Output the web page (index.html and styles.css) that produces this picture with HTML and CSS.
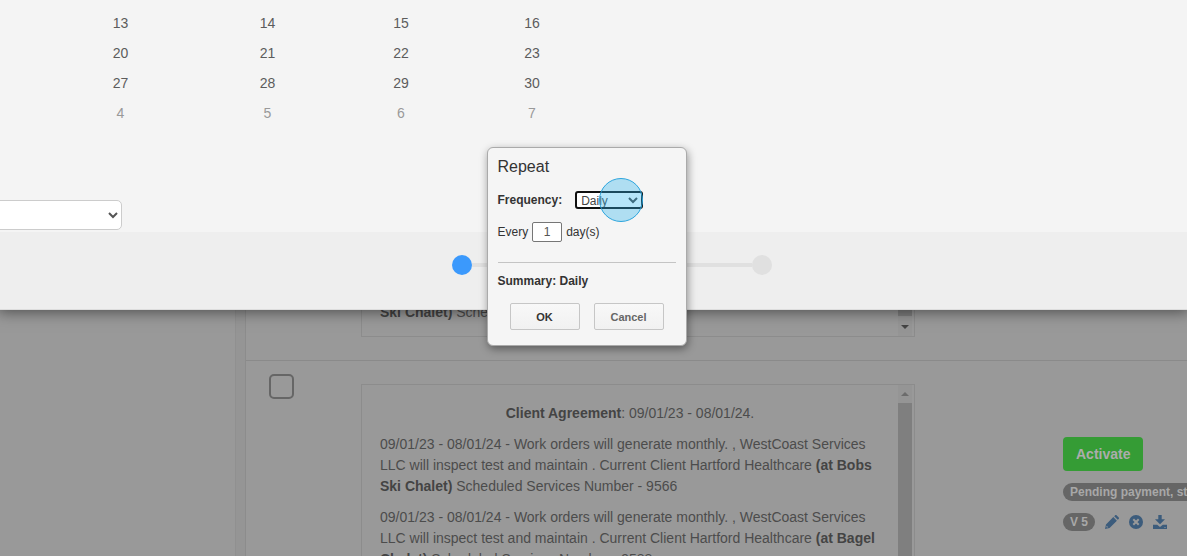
FILE: index.html
```
<!DOCTYPE html>
<html lang="en">
<head>
    <meta charset="UTF-8">
    <meta name="viewport" content="width=device-width, initial-scale=1.0">
    <title>Repeat</title>
    <link rel="stylesheet" href="styles.css">
</head>
<body>
    <div class="sheet">
        <div class="sheet-body">
            <table class="calendar">
                <tr><td class="sun">13</td><td class="mon">14</td><td class="tue">15</td><td class="wed">16</td></tr>
                <tr><td>20</td><td>21</td><td>22</td><td>23</td></tr>
                <tr><td>27</td><td>28</td><td>29</td><td>30</td></tr>
                <tr class="next-month"><td>4</td><td>5</td><td>6</td><td>7</td></tr>
            </table>
            <select class="time-select" aria-label="Time"><option></option></select>
        </div>
        <div class="sheet-footer">
            <div class="steps">
                <span class="step active"></span>
                <span class="step-line"></span>
                <span class="step"></span>
            </div>
        </div>
    </div>

    <div class="page">
        <div class="sidebar"></div>
        <div class="list">
            <div class="row row-first">
                <div class="agreement">
                    <div class="agreement-text">
                        <p><b>Ski Chalet)</b> Scheduled Services Number - 9566</p>
                    </div>
                    <div class="scrollbar">
                        <span class="thumb"></span>
                        <span class="arrow arrow-down"></span>
                    </div>
                </div>
            </div>
            <div class="row">
                <input type="checkbox" class="row-check" aria-label="Select agreement">
                <div class="agreement">
                    <div class="agreement-text">
                        <p class="agreement-title"><b>Client Agreement</b>: 09/01/23 - 08/01/24.</p>
                        <p>09/01/23 - 08/01/24 - Work orders will generate monthly. , WestCoast Services LLC will inspect test and maintain . Current Client Hartford Healthcare <b>(at Bobs Ski Chalet)</b> Scheduled Services Number - 9566</p>
                        <p>09/01/23 - 08/01/24 - Work orders will generate monthly. , WestCoast Services LLC will inspect test and maintain . Current Client Hartford Healthcare <b>(at Bagel Chalet)</b> Scheduled Services Number - 9588</p>
                    </div>
                    <div class="scrollbar">
                        <span class="arrow arrow-up"></span>
                        <span class="thumb"></span>
                    </div>
                </div>
                <div class="actions">
                    <button class="activate">Activate</button>
                    <span class="badge">Pending payment, start date</span>
                    <div class="tools">
                        <span class="badge">V 5</span>
                        <a href="#" aria-label="Edit">
                            <svg width="14" height="14" viewBox="0 0 14 14"><path d="M0 14l1-4.600L8.300 2.100l3.600 3.600L4.600 13zM9.200 1.200L10 .4c.5-.5 1.200-.5 1.700 0l1.900 1.900c.5.5.5 1.200 0 1.700l-.8.8z"/><path class="cut" d="M1.700 10.800l1.500 1.500-1.100.3-.7-.7z"/></svg>
                        </a>
                        <a href="#" aria-label="Cancel agreement">
                            <svg width="14" height="14" viewBox="0 0 14 14"><circle cx="7" cy="7" r="7"/><path class="cross" d="M4.300 4.300l5.400 5.400M9.700 4.300L4.300 9.700"/></svg>
                        </a>
                        <a href="#" aria-label="Download">
                            <svg width="14" height="14" viewBox="0 0 14 14"><path d="M5.300 0h3.400v4.200H12L7 9.200 2 4.200h3.300zM0 9.800h4.200L7 12l2.800-2.200H14V14H0z"/><path class="cut" d="M11.500 12h1v1h-1z"/></svg>
                        </a>
                    </div>
                </div>
            </div>
        </div>
    </div>

    <form class="popup">
        <h2>Repeat</h2>
        <div class="field frequency">
            <label for="frequency">Frequency:</label>
            <div class="select-wrap">
                <select id="frequency"><option>Daily</option></select>
                <span class="click-mark"></span>
            </div>
        </div>
        <div class="field every">
            <label for="interval">Every</label>
            <input type="text" id="interval" value="1">
            <span>day(s)</span>
        </div>
        <p class="summary">Summary: Daily</p>
        <div class="popup-buttons">
            <button type="button">OK</button>
            <button type="button" class="cancel">Cancel</button>
        </div>
    </form>
</body>
</html>
```
FILE: styles.css
```
* { box-sizing: border-box; }
html { height: 100%; }
body { margin: 0; height: 100%; display: flex; flex-direction: column; overflow: hidden; position: relative; background-color: #999; color: #4c4c4c; font: 14px/21px "Liberation Sans", Arial, sans-serif; }
p { margin: 0 0 10px; }
button, input, select { font-family: inherit; }

/* calendar sheet */
.sheet { position: relative; z-index: 1; flex: none; background-color: #f4f4f4; border-bottom: 1px solid #ddd; box-shadow: 0 0 14px 2px rgba(0, 0, 0, 0.5); }
.sheet-body { display: flex; flex-direction: column; align-items: flex-start; gap: 72px; padding: 8px 0 2px; }
.calendar { margin-left: 47px; border-collapse: collapse; color: #5c5c5c; }
.calendar td { height: 30px; padding: 0; text-align: center; }
.calendar .sun, .calendar .mon { width: 147px; }
.calendar .tue { width: 120px; }
.calendar .wed { width: 142px; }
.calendar .next-month { color: #999; }
.time-select { width: 132px; height: 30px; margin-left: -10px; padding: 0 3px; background-color: #fff; border: 1px solid #ccc; border-radius: 5px; color: #555; }
.sheet-footer { display: flex; justify-content: center; height: 77px; padding: 23px 0 0 37px; background-color: #eee; }
.steps { display: flex; align-items: center; width: 320px; height: 20px; }
.step { width: 20px; height: 20px; border-radius: 50%; background-color: #e0e0e0; }
.step.active { background-color: #3b99fc; }
.step-line { flex: 1; height: 4px; background-color: #e0e0e0; }

/* agreements list */
.page { flex: 1; display: flex; min-height: 0; background-color: #959595; }
.sidebar { width: 236px; flex: none; background-color: #999; border-right: 1px solid #909090; }
.list { flex: 1; min-width: 0; margin-left: 9px; display: flex; flex-direction: column; background-color: #999; border-left: 1px solid #8c8c8c; }
.row { flex: 1; display: flex; align-items: flex-start; min-height: 0; padding: 23px 0 0 115px; overflow: hidden; }
.row-first { flex: none; height: 51px; padding-top: 0; align-items: flex-end; padding-bottom: 23px; border-bottom: 1px solid #8a8a8a; }
.row-check { appearance: none; flex: none; width: 25px; height: 25px; margin: -10px 67px 0 -92px; border: 2px solid #666; border-radius: 5px; }
.agreement { flex: none; display: flex; width: 554px; border: 1px solid #8c8c8c; }
.agreement-text { flex: 1; padding: 18px 18px 0; }
.row-first .agreement-text { padding: 0 18px 3px; }
.row-first .agreement { border-top: none; margin-top: -20px; }
.agreement-title { text-align: center; }
.agreement b { color: #444; }
.scrollbar { display: flex; flex-direction: column; align-items: center; width: 14px; margin-right: 2px; background-color: #959595; }
.thumb { flex: 1; width: 14px; background-color: #7f7f7f; }
.arrow { border: 4px solid transparent; }
.arrow-up { border-top: none; border-bottom-color: #6c6c6c; margin: 7px 0; }
.arrow-down { border-bottom: none; border-top-color: #444; margin: 9px 0 7px; }

.actions { display: flex; flex-direction: column; align-items: flex-start; gap: 12px; margin: 53px 0 0 148px; white-space: nowrap; }
.activate { height: 34px; padding: 0 13px; border: none; border-radius: 4px; background-color: #359c35; color: #acacac; font-size: 14px; font-weight: bold; }
.badge { padding: 0 7px; border-radius: 9px; background-color: #666; color: #a8a8a8; font-size: 12px; font-weight: bold; line-height: 18px; }
.tools { display: flex; align-items: center; gap: 10px; }
.tools svg { display: block; fill: #3c5c7c; }
.tools .cut { fill: #999; }
.tools .cross { stroke: #999; stroke-width: 2; }

/* repeat popup */
.popup { position: absolute; z-index: 2; top: 147px; left: calc(50% - 107px); width: 200px; padding: 9px 10px 15px; background-color: #f5f5f5; border: 1px solid #aaa; border-radius: 6px; box-shadow: 1px 3px 8px rgba(0, 0, 0, 0.4); color: #333; font-size: 12px; line-height: 20px; }
.popup h2 { margin: 0 0 13px; font-size: 16px; font-weight: normal; line-height: 20px; }
.field { display: flex; align-items: center; height: 20px; }
.frequency { gap: 13px; margin-bottom: 12px; font-weight: bold; }
.select-wrap { position: relative; display: flex; }
.select-wrap select { width: 68px; height: 18px; padding: 0; border: 2px solid #101010; border-radius: 3px; background-color: #fff; color: #444; font-size: 12px; line-height: 14px; }
.click-mark { position: absolute; top: -13px; right: 0; width: 44px; height: 44px; border: 1px solid #2da5dd; border-radius: 50%; background-color: rgba(45, 181, 237, 0.35); pointer-events: none; }
.every { gap: 4px; }
.every input { width: 30px; height: 20px; padding: 0; border: 1px solid #767676; border-radius: 2px; background-color: #fff; color: #555; font-size: 12px; text-align: center; }
.summary { margin: 20px 0 12px; padding-top: 8px; border-top: 1px solid #c4c4c4; font-weight: bold; }
.popup-buttons { display: flex; justify-content: center; gap: 14px; }
.popup-buttons button { width: 70px; height: 27px; padding: 0; border: 1px solid #c6c6c6; border-radius: 2px; background: linear-gradient(#f8f8f8, #f1f1f1); color: #333; font-size: 11px; font-weight: bold; }
.popup-buttons .cancel { color: #666; }
```
